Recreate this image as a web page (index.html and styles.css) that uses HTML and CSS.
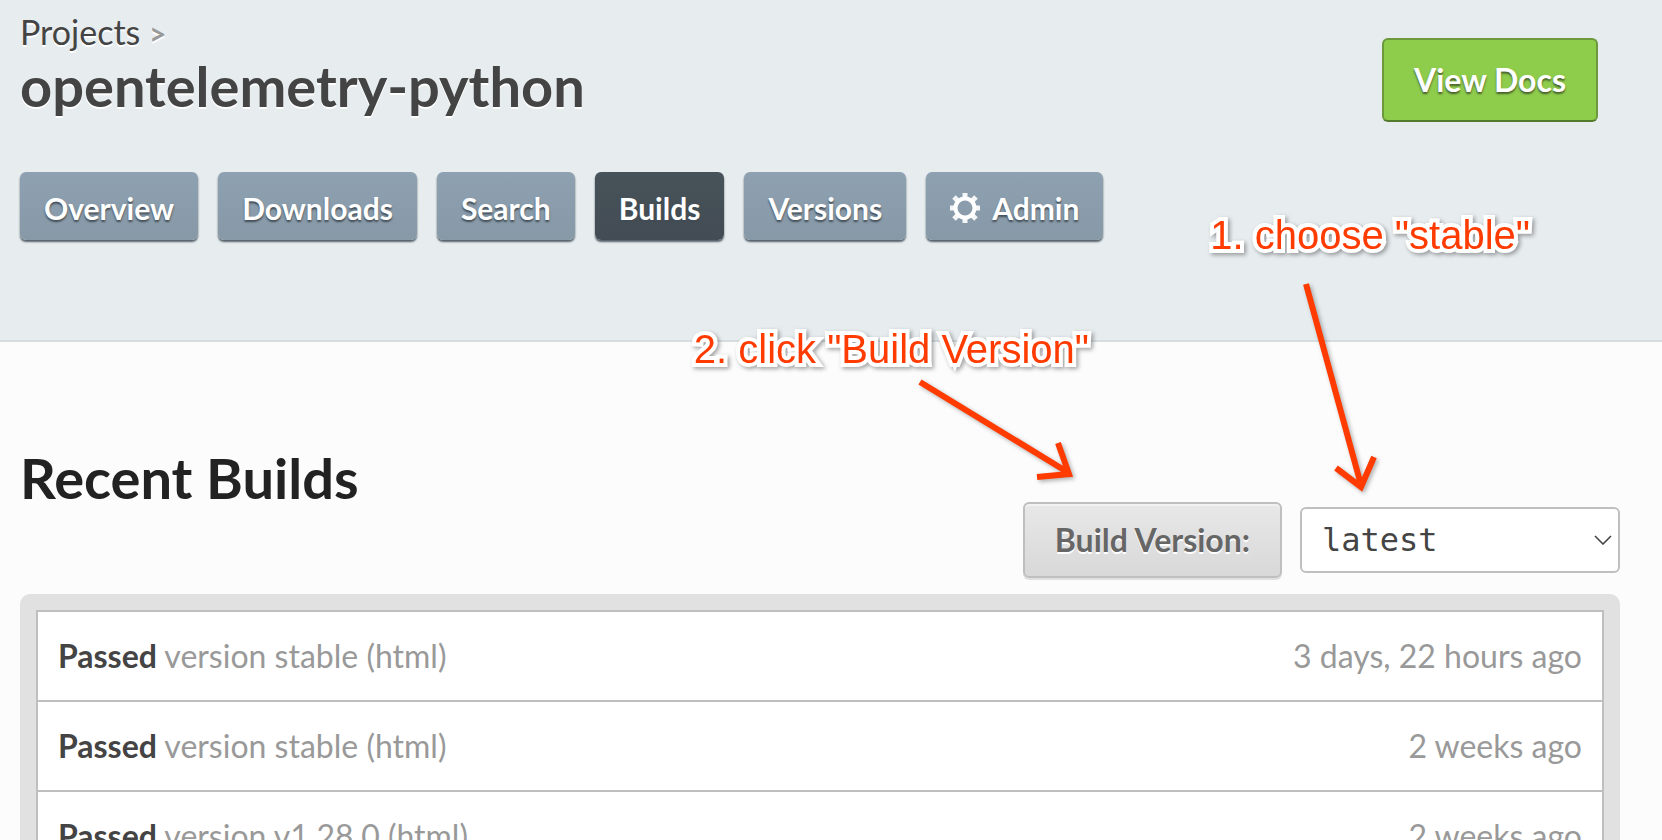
FILE: index.html
```html
<!DOCTYPE html>
<html lang="en">
<head>
<meta charset="utf-8">
<title>opentelemetry-python builds</title>
<link rel="stylesheet" href="styles.css">
</head>
<body>
<div class="page">
  <header class="masthead">
    <div class="project">
      <div>
        <div class="crumbs"><a href="#">Projects</a> <span class="sep">&gt;</span></div>
        <h1 class="title">opentelemetry-python</h1>
      </div>
      <a class="docs" href="#">View Docs</a>
    </div>
    <nav class="tabs">
      <a class="tab" href="#">Overview</a>
      <a class="tab" href="#">Downloads</a>
      <a class="tab" href="#">Search</a>
      <a class="tab active" href="#">Builds</a>
      <a class="tab" href="#">Versions</a>
      <a class="tab" href="#"><svg class="gear" viewBox="0 0 30 30" aria-hidden="true"><circle cx="15" cy="15" r="9.5" fill="none" stroke="#fff" stroke-width="4"/><path d="M15 0v6M15 24v6M0 15h6M24 15h6M4 4l5 5M21 21l5 5M26 4l-5 5M9 21l-5 5" stroke="#fff" stroke-width="5" stroke-opacity=".9"/></svg>Admin</a>
    </nav>
  </header>

  <main class="content">
    <h2 class="heading">Recent Builds</h2>
    <form class="build-form">
      <button class="build" type="button">Build Version:</button>
      <div class="picker">
        <select class="version" aria-label="Version"><option>latest</option><option>stable</option></select>
        <svg class="chevron" viewBox="0 0 18 10" aria-hidden="true"><path d="M1 1l8 8 8-8" fill="none" stroke="#444" stroke-width="1.6"/></svg>
      </div>
    </form>
    <div class="panel">
      <ul class="builds">
        <li class="row"><a class="what" href="#"><b>Passed</b> version stable (html)</a><span>3 days, 22 hours ago</span></li>
        <li class="row"><a class="what" href="#"><b>Passed</b> version stable (html)</a><span>2 weeks ago</span></li>
        <li class="row"><a class="what" href="#"><b>Passed</b> version v1.28.0 (html)</a><span>2 weeks ago</span></li>
      </ul>
    </div>
  </main>

  <div class="note note-choose">1. choose "stable"</div>
  <div class="note note-click">2. click "Build Version"</div>
  <svg class="arrow arrow-choose" width="60" height="230" viewBox="1326 274 60 230" aria-hidden="true"><path d="M1306 284L1361 485M1336 468L1361 487L1374 457"/></svg>
  <svg class="arrow arrow-click" width="170" height="110" viewBox="910 374 170 110" aria-hidden="true"><path d="M920 382L1069 473M1058 443L1069 474L1037 477"/></svg>
</div>
</body>
</html>
```
FILE: styles.css
```css
* { box-sizing: border-box; }
body {
  margin: 0;
  background: #fcfcfc;
  color: #444;
  font: 32px/40px Lato, sans-serif;
}
a { color: inherit; text-decoration: none; }
.page {
  position: relative;
  height: 100vh;
  overflow: hidden;
}
.masthead {
  padding: 12px 64px 100px 20px;
  background: #e7ecef;
  border-bottom: 2px solid #d5dde1;
}
.project {
  display: flex;
  justify-content: space-between;
  align-items: flex-start;
  height: 160px;
  text-shadow: 0 2px 0 #fff;
}
.crumbs { font-size: 34px; }
.sep { color: #999; font-size: 30px; font-weight: 700; }
.title {
  margin: 0;
  font-size: 56px;
  line-height: 66px;
}
.docs {
  margin-top: 26px;
  padding: 20px 30px;
  border: 2px solid #6b993b;
  border-bottom-color: #547a2d;
  border-radius: 6px;
  background: #8ecc4c;
  color: #fff;
  font-weight: 700;
  text-shadow: 0 2px 2px #465e2b;
}
.tabs { display: flex; gap: 20px; }
.tab {
  display: flex;
  align-items: center;
  gap: 12px;
  padding: 16px 24px 12px;
  border-radius: 6px;
  background: linear-gradient(#8ea1b1, #8799a7);
  box-shadow: 0 2px 2px #536069;
  color: #fff;
  font-size: 30px;
  font-weight: 700;
  text-shadow: 0 2px 2px #424c55;
}
.active { background: linear-gradient(#475259, #434c54); }
.gear { width: 30px; height: 30px; }
.content { padding: 108px 42px 0 20px; }
.heading {
  margin: 0;
  color: #222;
  font-size: 56px;
  line-height: 56px;
}
.build-form {
  display: flex;
  justify-content: flex-end;
  align-items: center;
  gap: 18px;
  margin: -4px 0 16px;
}
.build {
  height: 76px;
  padding: 0 30px;
  border: 2px solid #bfbfbf;
  border-radius: 6px;
  background: linear-gradient(#e8e8e8, #d8d8d8);
  box-shadow: inset 0 2px 0 #f2f2f2, 0 2px 0 #e0e0e0;
  color: #666;
  font: 700 32px/40px Lato, sans-serif;
  text-shadow: 0 2px 0 #fff;
}
.picker { position: relative; width: 320px; }
.version {
  display: block;
  width: 100%;
  height: 66px;
  padding: 0 20px;
  appearance: none;
  border: 2px solid #bfbfbf;
  border-radius: 6px;
  background: #fff;
  color: #444;
  font: 32px "DejaVu Sans Mono", monospace;
}
.chevron {
  position: absolute;
  right: 8px;
  top: 28px;
  width: 18px;
  height: 10px;
  pointer-events: none;
}
.panel {
  padding: 16px;
  border-radius: 10px;
  background: #e1e1e1;
}
.builds {
  margin: 0;
  padding: 0;
  border: 2px solid #bfbfbf;
  background: #fff;
  list-style: none;
}
.row {
  display: flex;
  justify-content: space-between;
  padding: 24px 20px;
  border-bottom: 2px solid #bfbfbf;
  color: #999;
}
.row b { color: #444; }
.note {
  position: absolute;
  color: #ff3b00;
  font: 40px/48px "Liberation Sans", Arial, sans-serif;
  white-space: nowrap;
  -webkit-text-stroke: 8px #fff;
  paint-order: stroke fill;
  filter: drop-shadow(2px 2px 2px rgba(0, 0, 0, 0.35));
}
.note-choose { right: 132px; top: 211px; }
.note-click { right: 573px; top: 325px; }
.arrow {
  position: absolute;
  overflow: visible;
  fill: none;
  stroke: #ff3b00;
  stroke-width: 6;
  filter: drop-shadow(2px 2px 2px rgba(0, 0, 0, 0.3));
}
.arrow-choose { right: 276px; top: 274px; }
.arrow-click { right: 582px; top: 374px; }
```
